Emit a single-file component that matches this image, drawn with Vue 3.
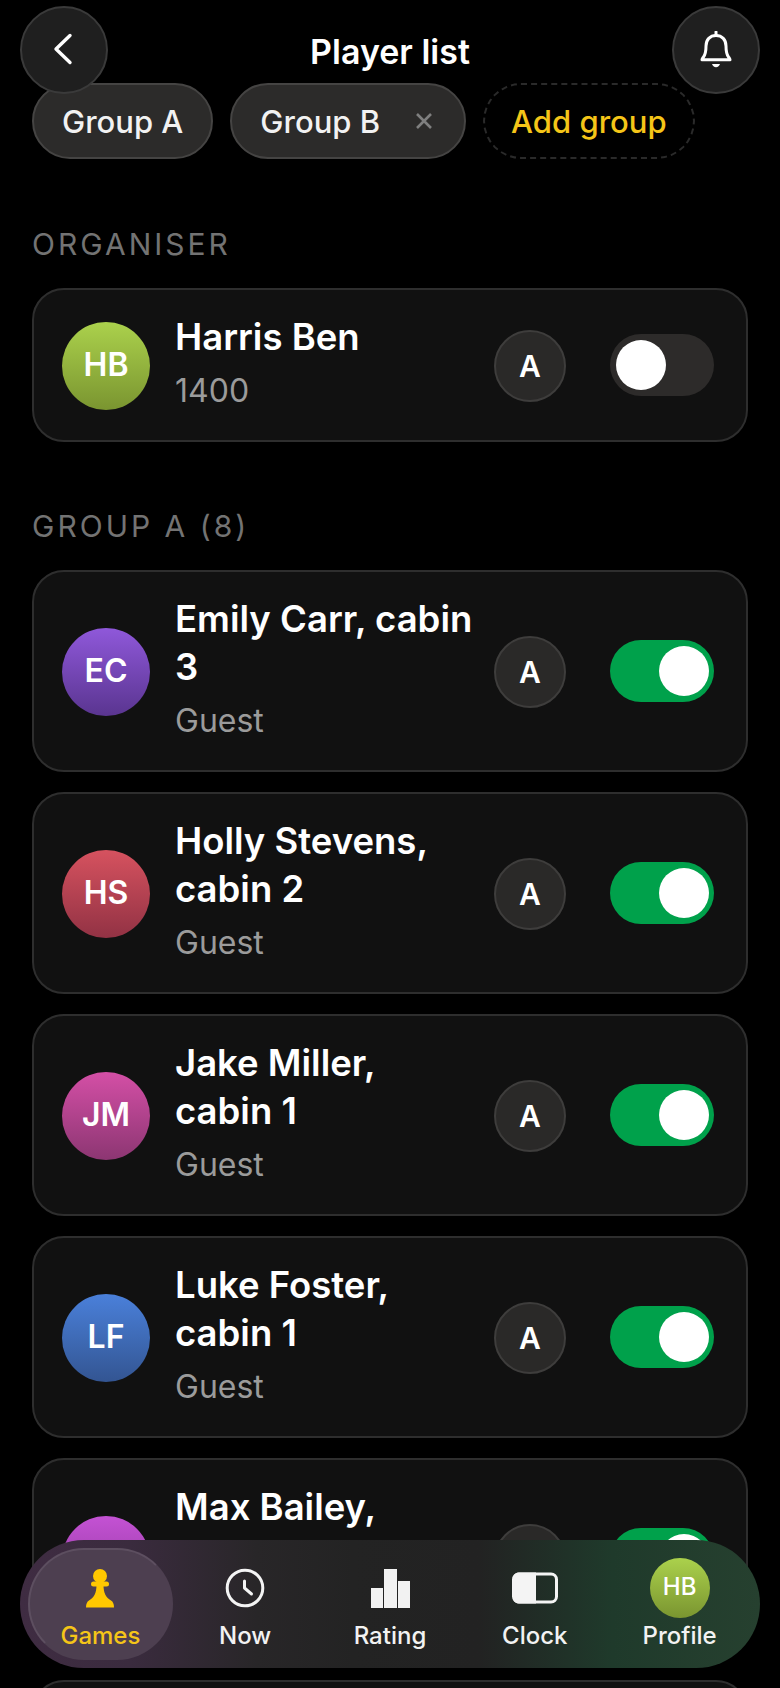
<script setup>
const players = [
  { initials: 'EC', name: 'Emily Carr, cabin 3', tone: 'purple' },
  { initials: 'HS', name: 'Holly Stevens, cabin 2', tone: 'red' },
  { initials: 'JM', name: 'Jake Miller, cabin 1', tone: 'pink' },
  { initials: 'LF', name: 'Luke Foster, cabin 1', tone: 'blue' },
  { initials: 'MB', name: 'Max Bailey, cabin 1', tone: 'violet' }
]
</script>

<template>
  <div class="screen">
    <header class="topbar">
      <button class="round" aria-label="Back">
        <svg width="28" height="40" viewBox="0 0 28 40" fill="none">
          <path d="M20 5.500 L6 19 L20 32.500" stroke="#fff" stroke-width="3.400" stroke-linecap="round" stroke-linejoin="round" />
        </svg>
      </button>
      <h1 class="title">Player list</h1>
      <button class="round" aria-label="Notifications">
        <svg width="32" height="38" viewBox="0 0 32 38" fill="none">
          <path d="M16 4.500c-6 0-10 4.200-10 10.500 0 5-.6 8.300-2.400 10.800-.8 1.100-1.600 2-1.600 3h28c0-1-.8-1.900-1.600-3C26.600 23.300 26 20 26 15c0-6.300-4-10.500-10-10.500Z" stroke="#fff" stroke-width="3" stroke-linejoin="round" />
          <path d="M16 1v3.500" stroke="#fff" stroke-width="3" stroke-linecap="round" />
          <path d="M12 33h8c-.6 2-2 3.200-4 3.200S12.600 35 12 33Z" fill="#fff" />
        </svg>
      </button>
    </header>

    <main class="content">
      <div class="chips">
        <div class="chip">Group A</div>
        <div class="chip">
          Group B
          <svg class="chip-x" width="18" height="18" viewBox="0 0 18 18" fill="none">
            <path d="M2 2 L16 16 M16 2 L2 16" stroke="#7f7f7f" stroke-width="2.600" />
          </svg>
        </div>
        <div class="chip chip-add">Add group</div>
      </div>

      <section class="section organiser">
        <h2 class="label">ORGANISER</h2>
        <div class="card">
          <div class="avatar green">HB</div>
          <div class="info">
            <div class="name">Harris Ben</div>
            <div class="sub">1400</div>
          </div>
          <div class="group-badge">A</div>
          <div class="toggle"><span class="knob"></span></div>
        </div>
      </section>

      <section class="section">
        <h2 class="label">GROUP A (8)</h2>
        <div class="list">
          <div v-for="p in players" :key="p.initials" class="card">
            <div class="avatar" :class="p.tone">{{ p.initials }}</div>
            <div class="info">
              <div class="name">{{ p.name }}</div>
              <div class="sub">Guest</div>
            </div>
            <div class="group-badge">A</div>
            <div class="toggle on"><span class="knob"></span></div>
          </div>
          <div class="card card-peek"></div>
        </div>
      </section>
    </main>

    <nav class="tabbar">
      <div class="tab active">
        <svg class="tab-icon" width="28" height="40" viewBox="0 0 28 40">
          <circle cx="14" cy="8" r="7" fill="#ffc800" />
          <rect x="5" y="13.500" width="18" height="5" rx="2.500" fill="#ffc800" />
          <path d="M10.500 17H17.500C17.500 25 20 29.500 25 32.500C27 33.700 28 36 28 39.500H0C0 36 1 33.700 3 32.500C8 29.500 10.500 25 10.500 17Z" fill="#ffc800" />
        </svg>
        <span>Games</span>
      </div>
      <div class="tab">
        <svg class="tab-icon" width="40" height="40" viewBox="0 0 40 40" fill="none">
          <circle cx="20" cy="20" r="17.800" stroke="#f4f4f4" stroke-width="3" />
          <path d="M19.500 13v7l7 6" stroke="#f4f4f4" stroke-width="3" stroke-linecap="round" stroke-linejoin="round" />
        </svg>
        <span>Now</span>
      </div>
      <div class="tab">
        <svg class="tab-icon" width="40" height="40" viewBox="0 0 40 40" fill="#f2f2f2">
          <rect x="1" y="20" width="12" height="20" />
          <rect x="14" y="1" width="13" height="39" />
          <rect x="28" y="13" width="12" height="27" />
        </svg>
        <span>Rating</span>
      </div>
      <div class="tab">
        <svg class="tab-icon" width="46" height="40" viewBox="0 0 46 40" fill="none">
          <path d="M7 4.500H24V35.500H7C3.500 35.500 1 33 1 29.500V10.500C1 7 3.500 4.500 7 4.500Z" fill="#f4f4f4" />
          <rect x="1.500" y="6" width="43" height="28" rx="5.500" stroke="#f4f4f4" stroke-width="3" />
        </svg>
        <span>Clock</span>
      </div>
      <div class="tab">
        <div class="avatar small green">HB</div>
        <span>Profile</span>
      </div>
    </nav>
  </div>
</template>

<style scoped>
.screen {
  position: relative;
  width: 780px;
  height: 1688px;
  overflow: hidden;
  background: #000;
  color: #fff;
  font-family: Inter, "Noto Sans", sans-serif;
}

.topbar {
  position: absolute;
  top: 6px;
  left: 20px;
  right: 20px;
  z-index: 2;
  display: flex;
  align-items: center;
  justify-content: space-between;
}

.round {
  display: flex;
  align-items: center;
  justify-content: center;
  width: 88px;
  height: 88px;
  padding: 0;
  border: 2px solid #3a3a3a;
  border-radius: 50%;
  background: #1f1f1f;
}

.title {
  margin: 4px 0 0;
  font-size: 34px;
  font-weight: 600;
  line-height: 84px;
}

.content {
  padding: 83px 32px 0;
}

.chips {
  display: flex;
  gap: 17px;
}

.chip {
  display: flex;
  align-items: center;
  height: 76px;
  padding: 0 28px;
  border: 2px solid #454443;
  border-radius: 38px;
  background: #2c2b2a;
  font-size: 31px;
  font-weight: 500;
  color: #f2f2f2;
  box-sizing: border-box;
}

.chip-x {
  margin-left: 35px;
  margin-right: 3px;
}

.chip-add {
  padding: 0 26px;
  border: 2px dashed #2a2a2a;
  background: transparent;
  color: #f5c518;
}

.section {
  margin-top: 66px;
}

.organiser {
  margin-top: 67px;
}

.label {
  margin: 0 0 26px;
  font-size: 30px;
  font-weight: 400;
  line-height: 36px;
  letter-spacing: 3px;
  color: #737373;
}

.list {
  display: flex;
  flex-direction: column;
  gap: 20px;
}

.card {
  display: flex;
  align-items: center;
  padding: 23px 32px 23px 28px;
  border: 2px solid #2e2e2e;
  border-radius: 32px;
  background: #111;
}

.card-peek {
  min-height: 154px;
}

.avatar {
  flex: none;
  display: flex;
  align-items: center;
  justify-content: center;
  width: 88px;
  height: 88px;
  margin-top: 2px;
  padding-bottom: 4px;
  border-radius: 50%;
  font-size: 32px;
  font-weight: 600;
  color: #fff;
  box-sizing: border-box;
}

.avatar.small {
  width: 60px;
  height: 60px;
  margin-top: 0;
  padding-bottom: 2px;
  font-size: 24px;
  font-weight: 500;
}

.green { background: linear-gradient(#abd14c, #7a9530); }
.purple { background: linear-gradient(#8f58da, #5a3590); }
.red { background: linear-gradient(#d6525f, #923244); }
.pink { background: linear-gradient(#d44fa6, #8c3672); }
.blue { background: linear-gradient(#4a80da, #335592); }
.violet { background: linear-gradient(#c452d4, #8a3596); }

.info {
  flex: 1;
  min-width: 0;
  margin-left: 25px;
  margin-right: 20px;
  padding-bottom: 4px;
}

.name {
  font-size: 36.500px;
  font-weight: 600;
  line-height: 48px;
  color: #fff;
}

.sub {
  margin-top: 8px;
  font-size: 32px;
  font-weight: 400;
  line-height: 44px;
  color: #9b9b9b;
}

.group-badge {
  flex: none;
  display: flex;
  align-items: center;
  justify-content: center;
  width: 72px;
  height: 72px;
  margin-top: 2px;
  border: 2px solid #3e3d3c;
  border-radius: 50%;
  background: #2a2928;
  font-size: 30px;
  font-weight: 600;
  box-sizing: border-box;
}

.toggle {
  flex: none;
  display: flex;
  align-items: center;
  width: 104px;
  height: 62px;
  margin-left: 44px;
  padding: 0 6px;
  border-radius: 31px;
  background: #2d2b2a;
  box-sizing: border-box;
}

.toggle.on {
  justify-content: flex-end;
  padding-right: 5px;
  background: #00a14b;
}

.knob {
  width: 50px;
  height: 50px;
  border-radius: 50%;
  background: #fff;
}

.tabbar {
  position: absolute;
  left: 20px;
  bottom: 20px;
  z-index: 3;
  display: grid;
  grid-template-columns: repeat(5, 1fr);
  width: 740px;
  height: 128px;
  padding: 8px;
  border-radius: 64px;
  background: linear-gradient(90deg, #3f2c42 0%, #3a2b3e 15%, #282628 32%, #232323 45%, #222 62%, #1f3a2b 80%, #26402f 100%);
  box-sizing: border-box;
}

.tab {
  display: flex;
  flex-direction: column;
  align-items: center;
  font-size: 24px;
  font-weight: 500;
  line-height: 30px;
  color: #f2f2f2;
  padding-top: 20px;
  height: 112px;
  box-sizing: border-box;
}

.tab > span {
  margin-top: 13px;
}

.tab-icon {
  display: block;
}

.tab:last-child {
  padding-top: 10px;
}

.tab:last-child > span {
  margin-top: 3px;
}

.tab.active {
  border: 2px solid #5d4f60;
  border-right-color: transparent;
  border-bottom-color: transparent;
  border-radius: 56px / 50%;
  background: #4d3f50;
  color: #f5c518;
  padding-top: 18px;
}
</style>

<style>
html, body {
  margin: 0;
  background: #000;
}
</style>
